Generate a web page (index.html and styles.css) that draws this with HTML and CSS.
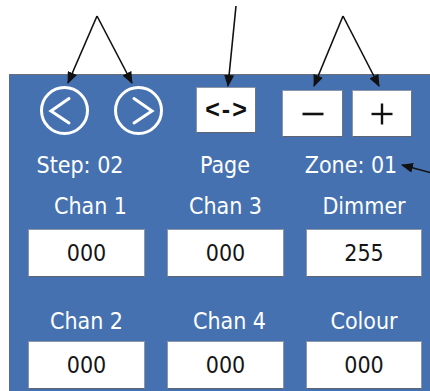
FILE: index.html
```html
<!DOCTYPE html>
<html>
<head>
<meta charset="utf-8">
<link rel="stylesheet" href="styles.css">
</head>
<body>
<div class="page">
  <div class="panel">
    <div class="btn-row">
      <div class="circle-btn">
        <svg width="49" height="49" viewBox="0 0 49 49"><circle cx="24.5" cy="24.5" r="23" fill="none" stroke="#fff" stroke-width="3"/><polyline points="29,12.5 11,25 29,37" fill="none" stroke="#fff" stroke-width="3" stroke-linecap="round" stroke-linejoin="miter"/></svg>
      </div>
      <div class="circle-btn second">
        <svg width="49" height="49" viewBox="0 0 49 49"><circle cx="24.5" cy="24.5" r="23" fill="none" stroke="#fff" stroke-width="3"/><polyline points="20,12.5 38,25 20,37" fill="none" stroke="#fff" stroke-width="3" stroke-linecap="round" stroke-linejoin="miter"/></svg>
      </div>
      <div class="box-btn page-btn">&lt;-&gt;</div>
      <div class="box-btn minus-btn">
        <svg width="22" height="22" viewBox="0 0 22 22"><line x1="0.5" y1="11" x2="21.5" y2="11" stroke="#111" stroke-width="2.6"/></svg>
      </div>
      <div class="box-btn plus-btn">
        <svg width="22" height="22" viewBox="0 0 22 22"><line x1="0.5" y1="11" x2="21.5" y2="11" stroke="#111" stroke-width="2.4"/><line x1="11" y1="0.5" x2="11" y2="21.5" stroke="#111" stroke-width="2.4"/></svg>
      </div>
    </div>
    <div class="status-row">
      <div class="lbl">Step: 02</div>
      <div class="lbl">Page</div>
      <div class="lbl">Zone: 01</div>
    </div>
    <div class="grid">
      <div class="cell"><div class="lbl nudge">Chan 1</div><div class="val">000</div></div>
      <div class="cell"><div class="lbl">Chan 3</div><div class="val">000</div></div>
      <div class="cell"><div class="lbl">Dimmer</div><div class="val">255</div></div>
      <div class="cell row2"><div class="lbl">Chan 2</div><div class="val">000</div></div>
      <div class="cell row2"><div class="lbl nudge">Chan 4</div><div class="val">000</div></div>
      <div class="cell row2"><div class="lbl">Colour</div><div class="val">000</div></div>
    </div>
  </div>
  <svg class="annot" width="430" height="391" viewBox="0 0 430 391">
    <defs>
      <marker id="ah" markerUnits="userSpaceOnUse" markerWidth="12" markerHeight="10" refX="11" refY="5" orient="auto">
        <path d="M0,0 L12,5 L0,10 Z" fill="#111"/>
      </marker>
    </defs>
    <g stroke="#111" stroke-width="1.6" fill="none">
      <line x1="97" y1="16" x2="68" y2="83" marker-end="url(#ah)"/>
      <line x1="97" y1="16" x2="132" y2="83" marker-end="url(#ah)"/>
      <line x1="236" y1="6" x2="228" y2="86" marker-end="url(#ah)"/>
      <line x1="343" y1="16" x2="314" y2="86" marker-end="url(#ah)"/>
      <line x1="343" y1="16" x2="379" y2="86" marker-end="url(#ah)"/>
      <line x1="432" y1="173" x2="402" y2="165" marker-end="url(#ah)"/>
    </g>
  </svg>
</div>
</body>
</html>
```

FILE: styles.css
```css
html, body {
  margin: 0;
  padding: 0;
  background: #fff;
}
.page {
  position: relative;
  width: 430px;
  height: 391px;
  overflow: hidden;
  font-family: "DejaVu Sans Condensed", "DejaVu Sans", sans-serif;
  font-stretch: condensed;
}
.annot {
  position: absolute;
  left: 0;
  top: 0;
}
.panel {
  margin: 74px 0 0 9px;
  width: 421px;
  height: 317px;
  box-sizing: border-box;
  background: #4571b0;
  border-top: 1px solid #6a6f78;
  border-left: 1px solid #5a6f90;
  padding: 11px 0 0 30px;
}
.btn-row {
  display: flex;
  align-items: flex-start;
  height: 50px;
}
.circle-btn {
  width: 49px;
  height: 49px;
}
.circle-btn svg { display: block; }
.circle-btn.second { margin-left: 25px; }
.box-btn {
  box-sizing: border-box;
  background: #fff;
  border: 1px solid #8d96a6;
  border-bottom-color: #5d6470;
  border-right-color: #6d7480;
  display: flex;
  align-items: center;
  justify-content: center;
}
.page-btn {
  width: 60px;
  height: 46px;
  margin: 1px 0 0 33px;
  font-family: "Liberation Sans", Arial, sans-serif;
  font-weight: bold;
  font-size: 25px;
  letter-spacing: 2px;
  text-indent: 2px;
  color: #111;
  font-stretch: normal;
  padding-bottom: 2px;
}
.minus-btn {
  width: 61px;
  height: 47px;
  margin: 4px 0 0 26px;
}
.plus-btn {
  width: 60px;
  height: 47px;
  margin: 4px 0 0 9px;
}
.box-btn svg { display: block; }
.status-row {
  display: grid;
  grid-template-columns: 140px 150px 102px;
  margin: 16px 0 0 -30px;
}
.lbl {
  color: #fff;
  font-size: 23px;
  line-height: 26px;
  text-align: center;
}
.grid {
  display: grid;
  grid-template-columns: 117px 117px 116px;
  column-gap: 22px;
  margin: 15px 0 0 -12px;
}
.cell .lbl {
  margin-bottom: 10px;
}
.cell .lbl.nudge {
  padding-left: 8px;
}
.cell.row2 {
  margin-top: 31px;
}
.cell.row2 .lbl {
  margin-bottom: 7px;
}
.val {
  box-sizing: border-box;
  height: 48px;
  background: #fff;
  border: 1px solid #8d96a6;
  border-bottom-color: #5d6470;
  display: flex;
  align-items: center;
  justify-content: center;
  font-size: 23px;
  color: #151515;
}
```
